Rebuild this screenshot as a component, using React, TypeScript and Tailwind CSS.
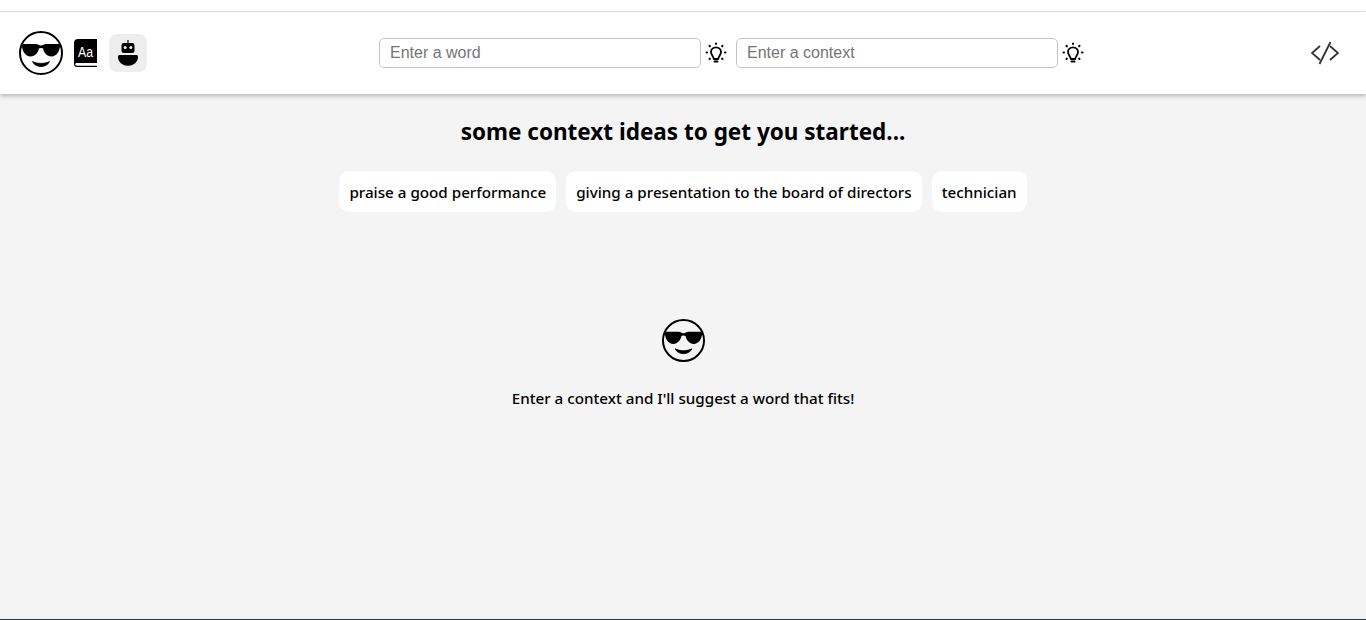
import React from 'react';

const ideas = ['praise a good performance', 'giving a presentation to the board of directors', 'technician'];

const CoolFace = ({ className }: { className: string }) => (
  <svg viewBox="0 0 44 44" className={className}>
    <circle cx="22" cy="22" r="21" fill="none" stroke="#000" strokeWidth="2" />
    <path d="M3 14.500 C3 13.500 4 13 5 13 H17 C19 13 20 14.500 22 14.500 C24 14.500 25 13 27 13 H39 C40 13 41 13.500 41 14.500 C41 20 37.500 25.500 32.500 25.500 C28 25.500 24.500 21.500 24.200 17.500 C23 16.800 21 16.800 19.800 17.500 C19.500 21.500 16 25.500 11.500 25.500 C6.500 25.500 3 20 3 14.500 Z" fill="#000" />
    <path d="M13.500 30.500 C18 33 26 33 30.500 30.500 C29 34 25.500 35.500 22 35.500 C18.500 35.500 15 34 13.500 30.500 Z" fill="#000" stroke="#000" strokeWidth="0.8" strokeLinejoin="round" />
  </svg>
);

const Bulb = () => (
  <svg viewBox="0 0 22 22" className="h-[22px] w-[22px] shrink-0" fill="none" stroke="#000" strokeLinecap="round">
    <path d="M8.800 17 C8.800 14.500 6 13.300 6 10 C6 7.200 8.200 5.300 11 5.300 C13.800 5.300 16 7.200 16 10 C16 13.300 13.200 14.500 13.200 17 Z" strokeWidth="1.800" strokeLinejoin="round" />
    <path d="M9.500 19.500 H12.500" strokeWidth="2" />
    <path d="M11 1.500 V2 M4.500 3.800 L4.900 4.200 M17.500 3.800 L17.100 4.200 M1.500 10.500 H2 M20 10.500 H20.500 M4.500 17 L4.900 16.600 M17.500 17 L17.100 16.600" strokeWidth="2" />
  </svg>
);

const SearchField = ({ placeholder }: { placeholder: string }) => (
  <>
    <input
      placeholder={placeholder}
      className="h-[30px] w-[322px] rounded-[5px] border border-[#c4c4c4] bg-white px-[10px] font-['Liberation_Sans',sans-serif] text-[16px] outline-none placeholder:text-[#757575]"
    />
    <Bulb />
  </>
);

export default function App() {
  return (
    <div className="flex h-[620px] flex-col overflow-hidden border-b border-[#2b3a3d] bg-[#f4f4f4] font-['Noto_Sans',sans-serif] text-black">
      <div className="h-3 shrink-0 border-b border-[#e3e3e3] bg-white" />
      <header className="z-10 flex h-[82px] shrink-0 items-center bg-white pl-[19px] pr-[27px] shadow-[0_2px_4px_rgba(0,0,0,0.25)]">
        <div className="flex w-[360px] items-center">
          <CoolFace className="h-[44px] w-[44px]" />
          <svg viewBox="0 0 23 28" className="ml-[11px] h-[28px] w-[23px]">
            <path d="M4 0 H23 V24 H3 C2 24 1.200 24.500 1.200 25.300 C1.200 26.100 2 26.700 3 26.700 H23 V28 H3 C1.200 28 0 26.700 0 25 V4 C0 1.500 1.500 0 4 0 Z" fill="#000" />
            <text x="11.500" y="17.500" fill="#fff" fontSize="14" textAnchor="middle" textLength="15" lengthAdjust="spacingAndGlyphs" fontFamily="Liberation Sans, sans-serif">Aa</text>
          </svg>
          <div className="ml-3 flex h-[38px] w-[38px] items-center justify-center rounded-lg bg-[#eeeeee]">
            <svg viewBox="0 0 22 26" className="h-[26px] w-[22px]">
              <path d="M10.400 0 H11.600 V3 H15 C16.700 3 17.500 3.800 17.500 5.500 V10.500 C17.500 12.200 16.700 13 15 13 H7 C5.300 13 4.500 12.200 4.500 10.500 V5.500 C4.500 3.800 5.300 3 7 3 H10.400 Z" fill="#000" />
              <circle cx="8.200" cy="7.500" r="1.500" fill="#eee" />
              <circle cx="13.800" cy="7.500" r="1.500" fill="#eee" />
              <path d="M3 15 H19 C20.500 15 21 15.500 21 17 C21 22 16.500 25.800 11 25.800 C5.500 25.800 1 22 1 17 C1 15.500 1.500 15 3 15 Z" fill="#000" />
            </svg>
          </div>
        </div>
        <div className="flex items-center gap-1">
          <SearchField placeholder="Enter a word" />
          <div className="w-px" />
          <SearchField placeholder="Enter a context" />
        </div>
        <svg viewBox="0 0 28 24" className="ml-auto h-[24px] w-[28px]" fill="none" stroke="#333333" strokeWidth="1.800">
          <path d="M9 5 L1 12 L9 19" />
          <path d="M19 5 L27 12 L19 19" />
          <path d="M19.500 1 L8.500 23" />
        </svg>
      </header>
      <main className="flex flex-1 flex-col items-center">
        <h2 className="mt-[22px] text-[22.5px] font-bold leading-[32px]">some context ideas to get you started...</h2>
        <div className="mt-[23px] flex gap-[10px]">
          {ideas.map((idea) => (
            <button key={idea} className="h-[41px] rounded-[10px] bg-white px-[10px] pt-px text-[15.2px] font-medium">
              {idea}
            </button>
          ))}
        </div>
        <CoolFace className="mt-[107px] h-[43px] w-[43px]" />
        <p className="mt-[25px] text-[15.2px] font-medium leading-[22px]">Enter a context and I'll suggest a word that fits!</p>
      </main>
    </div>
  );
}
